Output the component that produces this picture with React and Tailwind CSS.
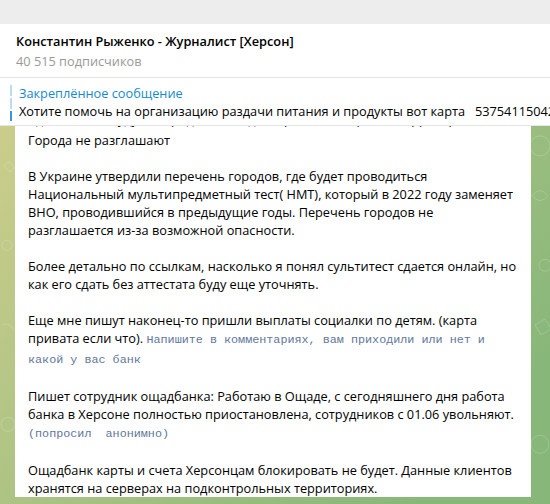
import React from 'react';

const sans = { fontFamily: '"Open Sans", "Noto Sans", sans-serif' };

const Mono = ({ children }) => (
  <span className="font-['Liberation_Mono',monospace] text-[11.75px] text-[#62779a]">{children}</span>
);

const Paragraph = ({ children }) => <p className="mb-[18px]">{children}</p>;

function Header() {
  return (
    <div className="bg-white border-b border-[#e3e3e3] h-[54px] px-4 pt-[7px]">
      <div className="text-[12.75px] font-semibold text-black leading-[20px]">
        Константин Рыженко - Журналист [Херсон]
      </div>
      <div className="text-[12.75px] text-[#999999] leading-[20px]">40 515 подписчиков</div>
    </div>
  );
}

function Pinned() {
  return (
    <div className="bg-white h-[48px] flex items-start pt-[6px] pl-[10px] border-b border-[#e6e6e6] relative z-10">
      <div className="flex flex-col gap-[2px] mt-[1px] w-[2px] shrink-0">
        <div className="h-[11px] bg-[#b9dcf3]" />
        <div className="h-[11px] bg-[#b9dcf3]" />
        <div className="h-[10px] bg-[#3a97d8]" />
      </div>
      <div className="ml-[7px] whitespace-nowrap text-[12.75px] leading-[18px]">
        <div className="text-[#168acd]">Закреплённое сообщение</div>
        <div className="text-black">
          Хотите помочь на организацию раздачи питания и продукты вот карта&nbsp;&nbsp; 5375411504258863
        </div>
      </div>
    </div>
  );
}

function Wallpaper() {
  return (
    <svg className="absolute inset-0 w-full h-full" viewBox="0 0 550 380" preserveAspectRatio="none">
      <defs>
        <linearGradient id="wp" x1="0" y1="0" x2="1" y2="0.6">
          <stop offset="0" stopColor="#cbcd8a" />
          <stop offset="0.5" stopColor="#a9c283" />
          <stop offset="1" stopColor="#88b77a" />
        </linearGradient>
      </defs>
      <rect width="550" height="380" fill="url(#wp)" />
      <g fill="none" stroke="#ffffff" strokeOpacity="0.18" strokeWidth="1">
        <circle cx="540" cy="20" r="10" />
        <path d="M532 70 q8 -10 16 0 q-8 10 -16 0" />
        <circle cx="545" cy="140" r="6" />
        <path d="M535 200 l10 -6 l6 10 l-10 6 z" />
        <circle cx="540" cy="320" r="9" />
        <path d="M4 40 q6 -8 10 2 q-4 8 -10 -2" />
        <circle cx="7" cy="120" r="5" />
        <path d="M2 200 q8 -4 12 6" />
        <circle cx="8" cy="300" r="7" />
      </g>
    </svg>
  );
}

function Message() {
  return (
    <div className="relative ml-[15px] w-[516px] -mt-[16px] bg-white rounded-t-[6px] pl-[13px] pr-[10px] pt-[3px] text-[12.75px] leading-[18px] text-black">
      {/* line scrolled mostly under the pinned bar */}
      <p className="h-[18px] leading-[13px] whitespace-nowrap">
        Сдавать тест будут в городах, на подконтрольных Украине территориях.
      </p>
      <Paragraph>Города не разглашают</Paragraph>
      <Paragraph>
        В Украине утвердили перечень городов, где будет проводиться Национальный мультипредметный тест( НМТ), который в 2022 году заменяет ВНО, проводившийся в предыдущие годы. Перечень городов не разглашается из-за возможной опасности.
      </Paragraph>
      <Paragraph>
        Более детально по ссылкам, насколько я понял сультитест сдается онлайн, но как его сдать без аттестата буду еще уточнять.
      </Paragraph>
      <Paragraph>
        Еще мне пишут наконец-то пришли выплаты социалки по детям. (карта привата если что). <Mono>Напишите в комментариях, вам приходили или нет и какой у вас банк</Mono>
      </Paragraph>
      <Paragraph>
        Пишет сотрудник ощадбанка: Работаю в Ощаде, с сегодняшнего дня работа банка в Херсоне полностью приостановлена, сотрудников с 01.06 увольняют. <br />
        <Mono>(попросил&nbsp; анонимно)</Mono>
      </Paragraph>
      <Paragraph>
        Ощадбанк карты и счета Херсонцам блокировать не будет. Данные клиентов хранятся на серверах на подконтрольных территориях.
      </Paragraph>
    </div>
  );
}

export default function App() {
  return (
    <div className="w-[550px] h-[504px] overflow-hidden flex flex-col bg-white" style={sans}>
      <div className="h-[24px] bg-[#ededed] shrink-0" />
      <Header />
      <Pinned />
      <div className="relative flex-1 overflow-hidden">
        <Wallpaper />
        <Message />
      </div>
    </div>
  );
}
